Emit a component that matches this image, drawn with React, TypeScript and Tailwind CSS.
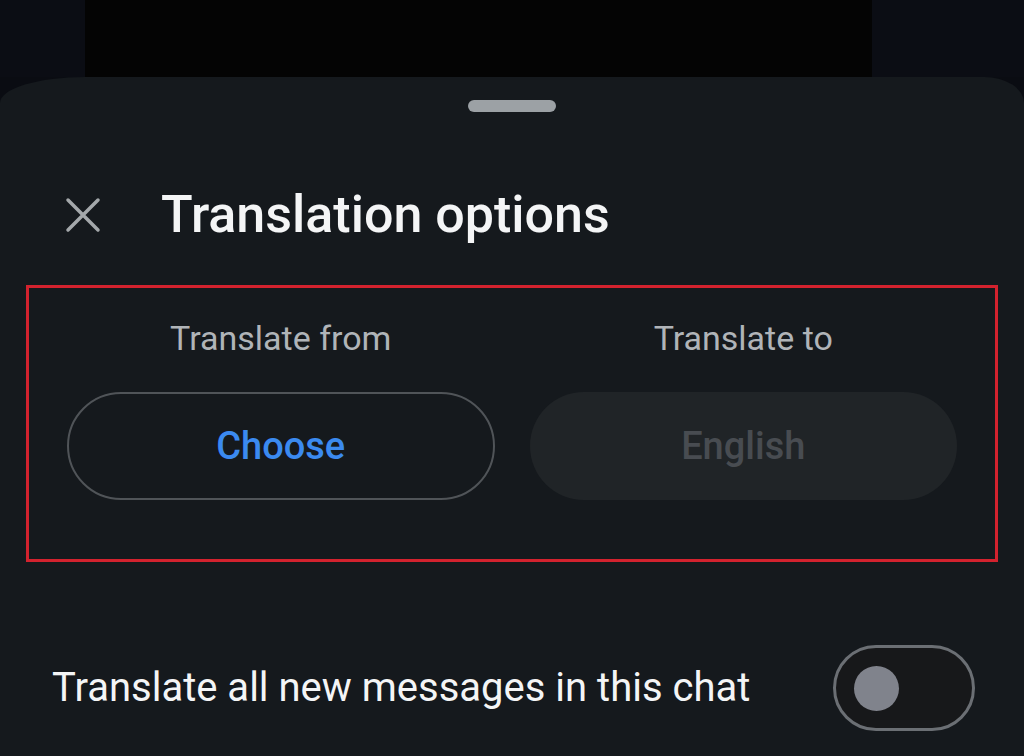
import { useState } from 'react';

const font = { fontFamily: '"Roboto", "Noto Sans", sans-serif' };

function CloseIcon() {
  return (
    <svg className="h-[36px] w-[36px]" viewBox="0 0 36 36" fill="none" stroke="currentColor" strokeWidth={3.5} strokeLinecap="round">
      <path d="M3 3l30 30M33 3L3 33" />
    </svg>
  );
}

function Toggle({ on, onChange }: { on: boolean; onChange: (v: boolean) => void }) {
  return (
    <button
      onClick={() => onChange(!on)}
      className="flex h-[86px] w-[142px] shrink-0 items-center rounded-full border-[3px] border-[#6b6f74] bg-[#17181a] px-[18px]"
    >
      <span className="h-[45px] w-[45px] rounded-full bg-[#80838c]" />
    </button>
  );
}

export default function App() {
  const [autoTranslate, setAutoTranslate] = useState(false);

  return (
    <div className="flex h-[756px] w-[1024px] flex-col overflow-hidden bg-[#0a0c12]" style={font}>
      {/* chat wallpaper peeking above the sheet */}
      <div className="flex h-[77px] shrink-0">
        <div className="w-[85px] bg-[#0b0d14]" />
        <div className="flex-1 bg-[#040404]" />
        <div className="w-[152px] bg-[#0b0d14]" />
      </div>

      {/* bottom sheet */}
      <div className="flex flex-1 flex-col rounded-tl-[85px_26px] rounded-tr-[40px_26px] bg-[#15191d]">
        <div className="flex justify-center pt-[23px]">
          <div className="h-[12px] w-[88px] rounded-full bg-[#9ca1a5]" />
        </div>

        <div className="mt-[77px] flex items-center pl-[65px]">
          <span className="text-[#a4a8ab]">
            <CloseIcon />
          </span>
          <h1 className="ml-[60px] text-[52px] font-medium leading-none text-[#f4f5f6]">Translation options</h1>
        </div>

        <div className="mx-[26px] mt-[44px] border-[3px] border-[#d3222e] px-[38px] pb-[59px] pt-[33px]">
          <div className="grid grid-cols-2 gap-[35px]">
            <div className="flex flex-col items-center">
              <span className="text-[34px] leading-none text-[#b0b4b8]">Translate from</span>
              <button className="mt-[37px] flex h-[108px] w-full items-center justify-center rounded-full border-2 border-[#505458] text-[38px] font-medium text-[#3b8af0]">
                Choose
              </button>
            </div>
            <div className="flex flex-col items-center">
              <span className="text-[34px] leading-none text-[#b0b4b8]">Translate to</span>
              <button className="mt-[37px] flex h-[108px] w-full items-center justify-center rounded-full bg-[#202427] text-[38px] font-medium text-[#484c51]">
                English
              </button>
            </div>
          </div>
        </div>

        <div className="mt-[83px] flex items-center justify-between pl-[52px] pr-[49px]">
          <span className="text-[40px] leading-none text-[#f4f5f6]">Translate all new messages in this chat</span>
          <Toggle on={autoTranslate} onChange={setAutoTranslate} />
        </div>
      </div>
    </div>
  );
}
